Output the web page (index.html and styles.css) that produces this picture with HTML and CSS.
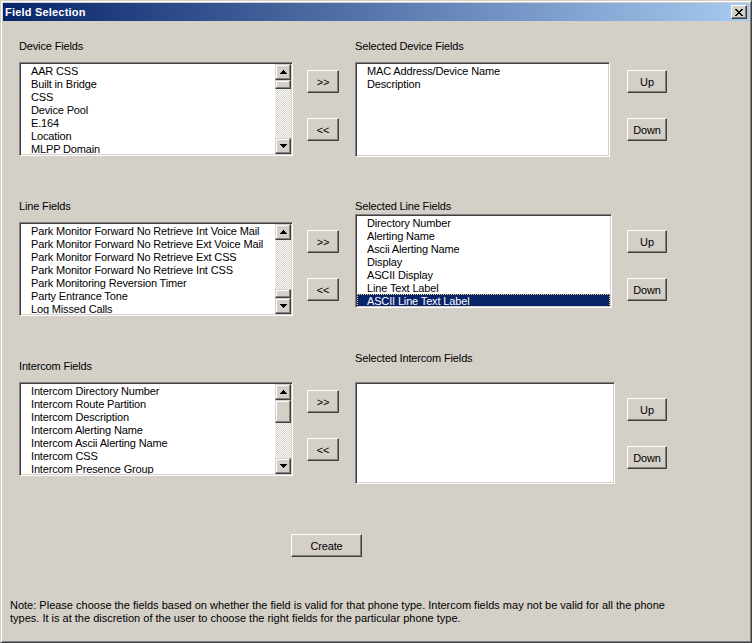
FILE: index.html
```html
<!DOCTYPE html>
<html>
<head>
<meta charset="utf-8">
<title>Field Selection</title>
<link rel="stylesheet" href="styles.css">
</head>
<body>
<div class="window">
  <div class="titlebar">
    <span class="title">Field Selection</span>
    <div class="close raised">
      <svg width="8" height="7" viewBox="0 0 8 7" shape-rendering="crispEdges"><path fill="#000" d="M0 0h2v1H0z M6 0h2v1H6z M1 1h2v1H1z M5 1h2v1H5z M2 2h4v1H2z M3 3h2v1H3z M2 4h4v1H2z M1 5h2v1H1z M5 5h2v1H5z M0 6h2v1H0z M6 6h2v1H6z"/></svg>
    </div>
  </div>

  <div class="content">
    <div class="section s1">
      <div class="col c1">
        <div class="label">Device Fields</div>
        <div class="listbox left">
          <ul class="items">
            <li>AAR CSS</li>
            <li>Built in Bridge</li>
            <li>CSS</li>
            <li>Device Pool</li>
            <li>E.164</li>
            <li>Location</li>
            <li>MLPP Domain</li>
          </ul>
          <div class="scrollbar">
            <div class="sb-btn raised-sb"><svg width="7" height="4" viewBox="0 0 7 4" shape-rendering="crispEdges"><path d="M3 0h1v1H3z M2 1h3v1H2z M1 2h5v1H1z M0 3h7v1H0z"/></svg></div>
            <div class="track">
              <div class="thumb raised-sb small"></div>
            </div>
            <div class="sb-btn raised-sb"><svg width="7" height="4" viewBox="0 0 7 4" shape-rendering="crispEdges"><path d="M0 0h7v1H0z M1 1h5v1H1z M2 2h3v1H2z M3 3h1v1H3z"/></svg></div>
          </div>
        </div>
      </div>
      <div class="col c2">
        <div class="btn raised arrow">&gt;&gt;</div>
        <div class="btn raised arrow">&lt;&lt;</div>
      </div>
      <div class="col c3">
        <div class="label">Selected Device Fields</div>
        <div class="listbox right w1">
          <ul class="items">
            <li>MAC Address/Device Name</li>
            <li>Description</li>
          </ul>
        </div>
      </div>
      <div class="col c4">
        <div class="btn raised updown">Up</div>
        <div class="btn raised updown">Down</div>
      </div>
    </div>

    <div class="section s2">
      <div class="col c1">
        <div class="label">Line Fields</div>
        <div class="listbox left">
          <ul class="items">
            <li>Park Monitor Forward No Retrieve Int Voice Mail</li>
            <li>Park Monitor Forward No Retrieve Ext Voice Mail</li>
            <li>Park Monitor Forward No Retrieve Ext CSS</li>
            <li>Park Monitor Forward No Retrieve Int CSS</li>
            <li>Park Monitoring Reversion Timer</li>
            <li>Party Entrance Tone</li>
            <li>Log Missed Calls</li>
          </ul>
          <div class="scrollbar">
            <div class="sb-btn raised-sb"><svg width="7" height="4" viewBox="0 0 7 4" shape-rendering="crispEdges"><path d="M3 0h1v1H3z M2 1h3v1H2z M1 2h5v1H1z M0 3h7v1H0z"/></svg></div>
            <div class="track end">
              <div class="thumb raised-sb small"></div>
            </div>
            <div class="sb-btn raised-sb"><svg width="7" height="4" viewBox="0 0 7 4" shape-rendering="crispEdges"><path d="M0 0h7v1H0z M1 1h5v1H1z M2 2h3v1H2z M3 3h1v1H3z"/></svg></div>
          </div>
        </div>
      </div>
      <div class="col c2">
        <div class="btn raised arrow">&gt;&gt;</div>
        <div class="btn raised arrow">&lt;&lt;</div>
      </div>
      <div class="col c3">
        <div class="label">Selected Line Fields</div>
        <div class="listbox right w2">
          <ul class="items">
            <li>Directory Number</li>
            <li>Alerting Name</li>
            <li>Ascii Alerting Name</li>
            <li>Display</li>
            <li>ASCII Display</li>
            <li>Line Text Label</li>
            <li class="selected">ASCII Line Text Label</li>
          </ul>
        </div>
      </div>
      <div class="col c4">
        <div class="btn raised updown">Up</div>
        <div class="btn raised updown">Down</div>
      </div>
    </div>

    <div class="section s3">
      <div class="col c1">
        <div class="label">Intercom Fields</div>
        <div class="listbox left">
          <ul class="items">
            <li>Intercom Directory Number</li>
            <li>Intercom Route Partition</li>
            <li>Intercom Description</li>
            <li>Intercom Alerting Name</li>
            <li>Intercom Ascii Alerting Name</li>
            <li>Intercom CSS</li>
            <li>Intercom Presence Group</li>
          </ul>
          <div class="scrollbar">
            <div class="sb-btn raised-sb"><svg width="7" height="4" viewBox="0 0 7 4" shape-rendering="crispEdges"><path d="M3 0h1v1H3z M2 1h3v1H2z M1 2h5v1H1z M0 3h7v1H0z"/></svg></div>
            <div class="track">
              <div class="thumb raised-sb big"></div>
            </div>
            <div class="sb-btn raised-sb"><svg width="7" height="4" viewBox="0 0 7 4" shape-rendering="crispEdges"><path d="M0 0h7v1H0z M1 1h5v1H1z M2 2h3v1H2z M3 3h1v1H3z"/></svg></div>
          </div>
        </div>
      </div>
      <div class="col c2">
        <div class="btn raised arrow">&gt;&gt;</div>
        <div class="btn raised arrow">&lt;&lt;</div>
      </div>
      <div class="col c3">
        <div class="label">Selected Intercom Fields</div>
        <div class="listbox right w3">
          <ul class="items"></ul>
        </div>
      </div>
      <div class="col c4">
        <div class="btn raised updown">Up</div>
        <div class="btn raised updown">Down</div>
      </div>
    </div>

    <div class="create-row">
      <div class="btn raised create">Create</div>
    </div>

    <p class="note">Note: Please choose the fields based on whether the field is valid for that phone type. Intercom fields may not be valid for all the phone<br>types. It is at the discretion of the user to choose the right fields for the particular phone type.</p>
  </div>
</div>
</body>
</html>
```

FILE: styles.css
```css
* { box-sizing: border-box; }
html, body { margin: 0; padding: 0; }
body {
  background: #D4D0C8;
  font-family: "Liberation Sans", Arial, sans-serif;
  font-size: 11px;
  color: #000;
  letter-spacing: -0.15px;
}

.window {
  width: 752px;
  height: 643px;
  border: 1px solid;
  border-color: #D4D0C8 #404040 #404040 #D4D0C8;
  box-shadow: inset 1px 1px #fff, inset -1px -1px #808080;
  padding: 2px;
  background: #D4D0C8;
  overflow: hidden;
}

.titlebar {
  height: 18px;
  background: linear-gradient(to right, #0A246A, #A6CAF0);
  display: flex;
  align-items: center;
  justify-content: space-between;
  padding: 0 2px 0 2px;
}
.title {
  color: #fff;
  font-weight: bold;
  line-height: 14px;
  letter-spacing: 0.2px;
}

.raised {
  border: 1px solid;
  border-color: #fff #404040 #404040 #fff;
  box-shadow: inset -1px -1px #808080, inset 1px 1px #D4D0C8;
  background: #D4D0C8;
}
.raised-sb {
  border: 1px solid;
  border-color: #D4D0C8 #404040 #404040 #D4D0C8;
  box-shadow: inset -1px -1px #808080, inset 1px 1px #fff;
  background: #D4D0C8;
}

.close {
  width: 16px;
  height: 14px;
  display: flex;
  align-items: center;
  justify-content: center;
}
.close svg { display: block; }

.content {
  padding-top: 18px;
}

.section {
  display: flex;
  align-items: flex-start;
  margin-left: 16px;
}
.s2 { margin-top: 42px; }
.s3 { margin-top: 35px; }

.col { display: flex; flex-direction: column; }
.c1 { width: 274px; }
.c2 { width: 32px; margin-left: 14px; padding-top: 31px; gap: 25px; }
.c3 { width: 272px; margin-left: 16px; }
.c4 { width: 40px; padding-top: 31px; gap: 25px; }

.s3 .c1 { padding-top: 8px; }
.s3 .c2 { padding-top: 39px; }
.s3 .c4 { padding-top: 47px; }

.label {
  height: 13px;
  line-height: 14px;
  white-space: nowrap;
}

.listbox {
  display: flex;
  height: 94px;
  border: 1px solid;
  border-color: #808080 #fff #fff #808080;
  box-shadow: inset 1px 1px #404040, inset -1px -1px #D4D0C8;
  padding: 1px;
  background: #fff;
  margin-top: 10px;
  overflow: hidden;
}
.listbox.left { width: 274px; }
.listbox.w1 { width: 255px; height: 95px; }
.listbox.w2 { width: 257px; margin-top: 2px; }
.listbox.w3 { width: 260px; height: 102px; margin-top: 18px; }

.items {
  list-style: none;
  margin: 0;
  padding: 0;
  flex: 1;
  min-width: 0;
  overflow: hidden;
  background: #fff;
}
.items li {
  height: 13px;
  line-height: 14px;
  padding-left: 10px;
  white-space: nowrap;
}
.items li.selected {
  background: #0A246A;
  color: #fff;
  outline: 1px dotted #E8D870;
  outline-offset: -1px;
}

.scrollbar {
  width: 16px;
  display: flex;
  flex-direction: column;
}
.sb-btn {
  width: 16px;
  height: 16px;
  display: flex;
  align-items: center;
  justify-content: center;
  flex: none;
}
.sb-btn svg { display: block; fill: #000; }
.track {
  flex: 1;
  display: flex;
  flex-direction: column;
  justify-content: flex-start;
  background-color: #D4D0C8;
  background-image: repeating-conic-gradient(#fff 0 25%, #D4D0C8 0 50%);
  background-size: 2px 2px;
}
.track.end { justify-content: flex-end; }
.thumb { width: 16px; flex: none; }
.thumb.small { height: 9px; }
.thumb.big { height: 23px; }

.btn {
  height: 23px;
  display: flex;
  align-items: center;
  justify-content: center;
  line-height: 14px;
  padding-top: 1px;
  white-space: nowrap;
}
.arrow { width: 32px; }
.updown { width: 40px; }

.create-row {
  margin-top: 50px;
  padding-left: 288px;
}
.create { width: 71px; }

.note {
  margin: 42px 0 0 0;
  padding-left: 7px;
  line-height: 13px;
  letter-spacing: 0;
  white-space: nowrap;
}
```
